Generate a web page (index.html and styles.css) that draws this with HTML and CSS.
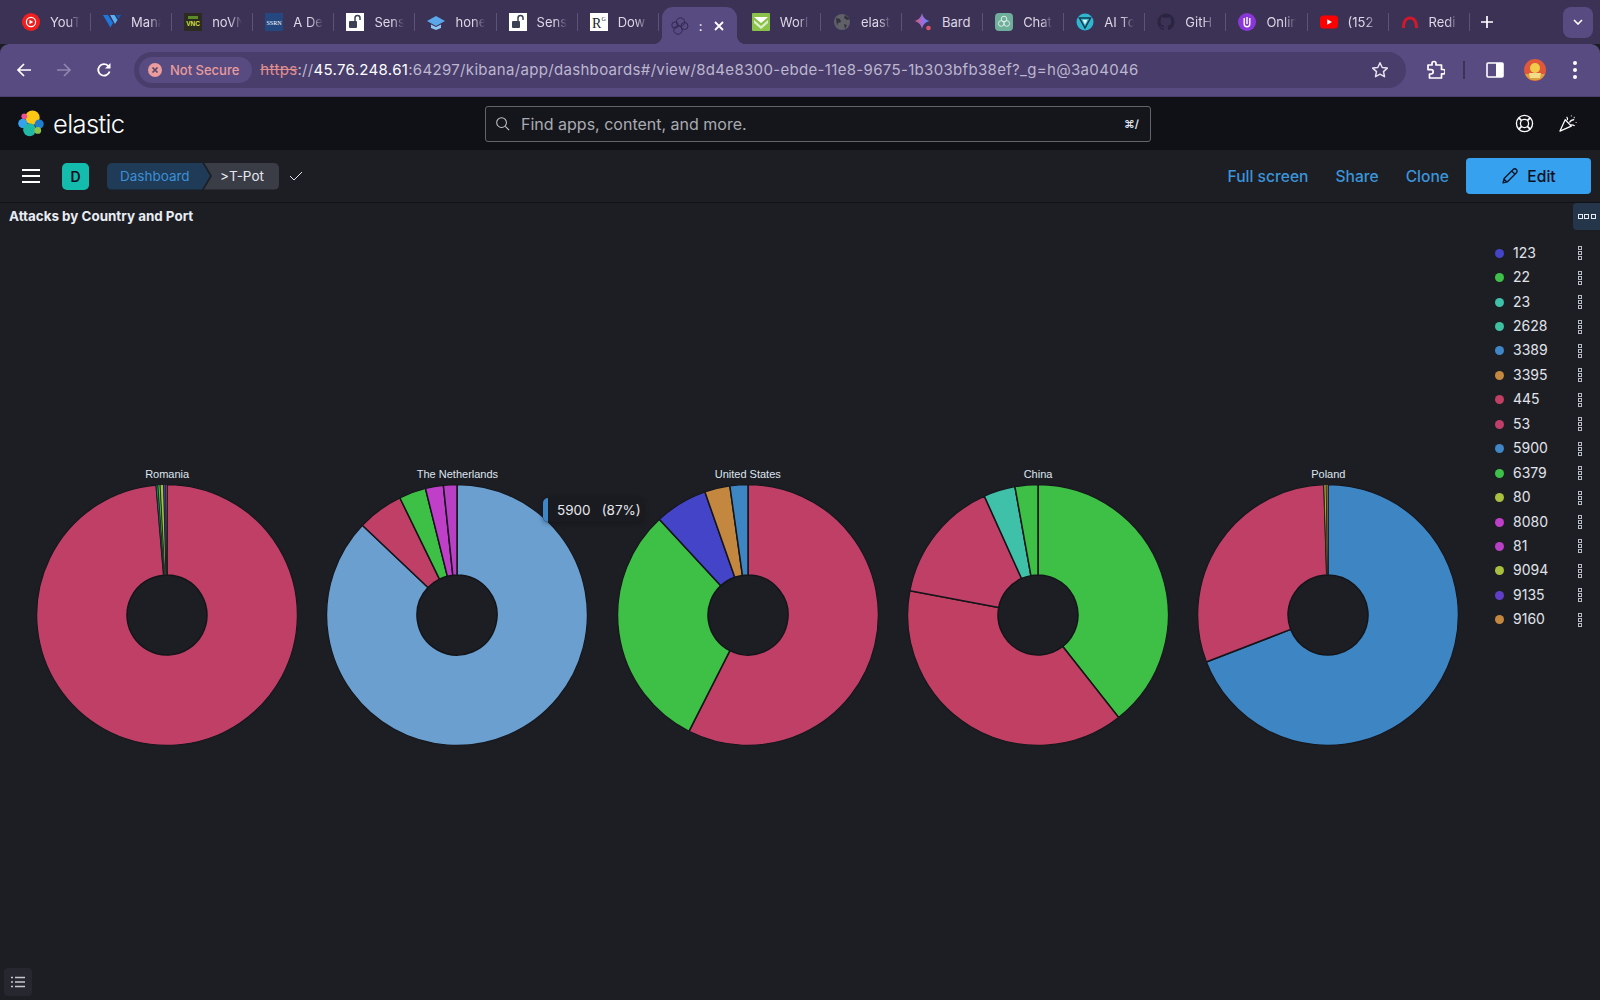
FILE: index.html
```html
<!DOCTYPE html>
<html>
<head>
<title>&gt;T-Pot - Elastic</title>
<link rel="stylesheet" href="styles.css">
</head>
<body>

  <!-- Browser tabs -->
  <div class="tabstrip">
    <div class="tab">
      <svg class="favicon" viewBox="0 0 18 18"><circle cx="9" cy="9" r="9" fill="#f01f1f"/><circle cx="9" cy="9" r="4.6" fill="none" stroke="#fff" stroke-width="1.2"/><path d="M7.5 6.7 11.2 9 7.5 11.3z" fill="#fff"/></svg>
      <span class="tab-title">YouT</span>
    </div>
    <div class="tab">
      <svg class="favicon" viewBox="0 0 18 18"><path d="M0 2h5l5 8-2.6 4.4z" fill="#1e78dc"/><path d="M7 2h4.500l3 5-2.500 4z" fill="#5ab0f5"/><path d="M13 2h5l-2.500 4z" fill="#0d5bb5"/></svg>
      <span class="tab-title">Mana</span>
    </div>
    <div class="tab">
      <svg class="favicon" viewBox="0 0 18 18"><rect width="18" height="18" fill="#2b2b22"/><text x="9" y="13" text-anchor="middle" class="vnc-mark">VNC</text><rect x="4" y="3" width="10" height="3" fill="#5a8a2a"/></svg>
      <span class="tab-title">noVN</span>
    </div>
    <div class="tab">
      <svg class="favicon" viewBox="0 0 18 18"><rect width="18" height="18" fill="#24477f"/><text x="9" y="11.500" text-anchor="middle" class="ssrn-mark">SSRN</text></svg>
      <span class="tab-title">A De</span>
    </div>
    <div class="tab">
      <svg class="favicon" viewBox="0 0 18 18"><rect width="18" height="18" fill="#fff"/><rect x="3" y="8" width="8" height="7" rx="1" fill="#3b4152"/><path d="M9 8V5a2.500 2.500 0 0 1 5 0v2" fill="none" stroke="#3b4152" stroke-width="1.500"/></svg>
      <span class="tab-title">Sens</span>
    </div>
    <div class="tab">
      <svg class="favicon" viewBox="0 0 18 18"><path d="M9 3l9 5-9 5-9-5z" fill="#5aa8ea"/><path d="M4 11.500 9 14l5-2.500V15l-5 2-5-2z" fill="#8cc6f2"/></svg>
      <span class="tab-title">hone</span>
    </div>
    <div class="tab">
      <svg class="favicon" viewBox="0 0 18 18"><rect width="18" height="18" fill="#fff"/><rect x="3" y="8" width="8" height="7" rx="1" fill="#3b4152"/><path d="M9 8V5a2.500 2.500 0 0 1 5 0v2" fill="none" stroke="#3b4152" stroke-width="1.500"/></svg>
      <span class="tab-title">Sens</span>
    </div>
    <div class="tab">
      <svg class="favicon" viewBox="0 0 18 18"><rect width="18" height="18" fill="#fff"/><text x="2" y="15" class="rg-mark">R</text><text x="11.500" y="8" class="rg-small">G</text></svg>
      <span class="tab-title">Dow</span>
    </div>
    <div class="tab active">
      <svg class="favicon" viewBox="0 0 18 18" fill="none" stroke="#2f2850" stroke-width="1"><circle cx="9.500" cy="5" r="4.200"/><circle cx="4" cy="8" r="3.200"/><circle cx="13.500" cy="9" r="3.500"/><circle cx="7" cy="13" r="4.200"/></svg>
      <span class="tab-colon">:</span>
      <svg class="tab-close" viewBox="0 0 10 10"><path d="M1 1 9 9M9 1 1 9" stroke="#fff" stroke-width="1.800"/></svg>
    </div>
    <div class="tab">
      <svg class="favicon" viewBox="0 0 18 18"><rect width="18" height="18" rx="1" fill="#8bc34a"/><path d="M2 4h14L9 10z" fill="#fff"/><path d="M2 7l7 6 7-6v3l-7 6-7-6z" fill="#dcedc8"/></svg>
      <span class="tab-title">Worl</span>
    </div>
    <div class="tab">
      <svg class="favicon" viewBox="0 0 18 18"><circle cx="9" cy="9" r="8" fill="#5f6068"/><path d="M3 5l4 1 1 3-3 1-1 3M12 2l-1 3 3 2 3-1M11 11l3 1-2 4z" fill="#35303f"/></svg>
      <span class="tab-title">elast</span>
    </div>
    <div class="tab">
      <svg class="favicon" viewBox="0 0 18 18"><path d="M8 0c.8 4 3 6.800 7.500 8C11 9.200 8.800 12 8 16 7.200 12 5 9.200.5 8 5 6.800 7.200 4 8 0z" fill="url(#bardfill)"/><circle cx="14.500" cy="15" r="2.300" fill="#d9566b"/><defs><linearGradient id="bardfill" x1="0" y1="0" x2="1" y2="0"><stop offset="0" stop-color="#d9566b"/><stop offset=".55" stop-color="#9a6fe0"/><stop offset="1" stop-color="#4c8df6"/></linearGradient></defs></svg>
      <span class="tab-title tab-title-full">Bard</span>
    </div>
    <div class="tab">
      <svg class="favicon" viewBox="0 0 18 18"><rect width="18" height="18" rx="4" fill="#6fae9a"/><g fill="none" stroke="#d9efe8" stroke-width="1"><circle cx="9" cy="6" r="2.800"/><circle cx="6.200" cy="10.500" r="2.800"/><circle cx="11.800" cy="10.500" r="2.800"/></g></svg>
      <span class="tab-title">Chat</span>
    </div>
    <div class="tab">
      <svg class="favicon" viewBox="0 0 18 18"><circle cx="9" cy="9" r="8.500" fill="#2fb6d0"/><path d="M3.500 5h11L9 15z" fill="none" stroke="#143a4c" stroke-width="1.500"/><path d="M6.500 6.800h5L9 11.500z" fill="#dff6fb"/></svg>
      <span class="tab-title">AI To</span>
    </div>
    <div class="tab">
      <svg class="favicon" viewBox="0 0 18 18"><path d="M9 .5a8.500 8.500 0 0 0-2.700 16.600c.4.100.6-.2.600-.4v-1.500c-2.400.5-2.900-1-2.900-1-.4-1-1-1.300-1-1.300-.8-.5.100-.5.100-.5.900.1 1.300.9 1.300.9.800 1.300 2 1 2.500.7.100-.6.300-1 .5-1.200-1.900-.2-3.900-1-3.900-4.200 0-.9.300-1.700.9-2.300-.1-.2-.4-1.100.1-2.300 0 0 .7-.2 2.300.9a8 8 0 0 1 4.200 0c1.600-1.100 2.300-.9 2.300-.9.500 1.200.2 2.100.1 2.300.5.600.9 1.400.9 2.300 0 3.300-2 4-3.900 4.200.3.300.6.800.6 1.600v2.300c0 .2.200.5.600.4A8.500 8.500 0 0 0 9 .5z" fill="#2a2540"/></svg>
      <span class="tab-title">GitH</span>
    </div>
    <div class="tab">
      <svg class="favicon" viewBox="0 0 18 18"><circle cx="9" cy="9" r="9" fill="#8b36d9"/><path d="M6.200 5v6a2.800 2.800 0 0 0 5.600 0V5" fill="none" stroke="#fff" stroke-width="1.400"/><path d="M9 4v7" stroke="#fff" stroke-width="1.400"/></svg>
      <span class="tab-title">Onlin</span>
    </div>
    <div class="tab">
      <svg class="favicon" viewBox="0 0 18 18"><rect y="2.500" width="18" height="13" rx="3.500" fill="#f00"/><path d="M7.200 6.200 12 9l-4.800 2.800z" fill="#fff"/></svg>
      <span class="tab-title">(152</span>
    </div>
    <div class="tab">
      <svg class="favicon" viewBox="0 0 18 18"><path d="M1 15C1 7 4.500 3.500 9 3.500S17 7 17 15h-3C14 9 12 6.500 9 6.500S4 9 4 15z" fill="#d3182a"/></svg>
      <span class="tab-title">Redi</span>
    </div>
    <div class="new-tab">
      <svg viewBox="0 0 12 12"><path d="M6 0v12M0 6h12" stroke="#fff" stroke-width="1.700"/></svg>
    </div>
    <div class="tab-search">
      <svg viewBox="0 0 10 6"><path d="M1 1l4 4 4-4" fill="none" stroke="#fff" stroke-width="1.600"/></svg>
    </div>
  </div>

  <!-- Browser toolbar -->
  <div class="toolbar">
    <svg class="nav-icon" viewBox="0 0 16 16"><path d="M15 8H2M8 2 2 8l6 6" fill="none" stroke="#fff" stroke-width="1.700"/></svg>
    <svg class="nav-icon" viewBox="0 0 16 16"><path d="M1 8h13M8 2l6 6-6 6" fill="none" stroke="#8f86ad" stroke-width="1.700"/></svg>
    <svg class="nav-icon" viewBox="0 0 16 16"><path d="M13.600 9.500A5.800 5.800 0 1 1 12.200 3.800" fill="none" stroke="#fff" stroke-width="1.800"/><path d="M14.500 1v5.500H9z" fill="#fff"/></svg>

    <div class="omnibox">
      <div class="not-secure">
        <svg viewBox="0 0 14 14"><circle cx="7" cy="7" r="7" fill="#ec9c9c"/><path d="M4.500 4.500l5 5M9.500 4.500l-5 5" stroke="#54486f" stroke-width="1.700"/></svg>
        <span>Not Secure</span>
      </div>
      <div class="url"><span class="url-scheme">https</span>://<span class="url-host">45.76.248.61</span>:64297/kibana/app/dashboards#/view/8d4e8300-ebde-11e8-9675-1b303bfb38ef?_g=h@3a04046</div>
      <svg class="star" viewBox="0 0 18 18"><path d="M9 1.800l2.200 4.700 5.100.6-3.800 3.500 1 5.100L9 13.200l-4.500 2.500 1-5.100L1.700 7.100l5.100-.6z" fill="none" stroke="#e6e2ef" stroke-width="1.500" stroke-linejoin="round"/></svg>
    </div>

    <div class="toolbar-right">
      <svg class="puzzle" viewBox="0 0 20 20"><path d="M7 3.500a2 2 0 0 1 4 0V5h5.500v4.500H18a2.200 2.200 0 0 1 0 4.400h-1.500V18H4.500v-4H6a2.200 2.200 0 0 0 0-4.400H3V5h4z" fill="none" stroke="#fff" stroke-width="1.700" stroke-linejoin="round"/></svg>
      <span class="toolbar-sep"></span>
      <svg class="sidepanel" viewBox="0 0 18 16"><rect x="1" y="1" width="16" height="14" rx="1" fill="none" stroke="#fff" stroke-width="1.600"/><rect x="10" y="1" width="7" height="14" fill="#fff"/></svg>
      <svg class="avatar" viewBox="0 0 22 22"><circle cx="11" cy="11" r="11" fill="#e0583a"/><path d="M1 15h20a11 11 0 0 1-20 0z" fill="#d9a23c"/><circle cx="11" cy="9" r="5" fill="#f3cb4a"/><path d="M5 14h12l-1 5H6z" fill="#f2dc8a"/></svg>
      <svg class="kebab-browser" viewBox="0 0 4 18"><circle cx="2" cy="2" r="2" fill="#fff"/><circle cx="2" cy="9" r="2" fill="#fff"/><circle cx="2" cy="16" r="2" fill="#fff"/></svg>
    </div>
  </div>

  <!-- Kibana header -->
  <div class="kbn-header">
    <div class="brand">
      <svg class="elastic-logo" viewBox="0 0 28 28">
        <circle cx="15" cy="8" r="7.500" fill="#fec514"/>
        <circle cx="6.500" cy="6.500" r="3" fill="#f04e98"/>
        <circle cx="5" cy="14" r="4.800" fill="#36a2ef"/>
        <circle cx="12" cy="20.500" r="6.700" fill="#22b8a6"/>
        <circle cx="22" cy="14.500" r="4.700" fill="#1e7fd0"/>
        <circle cx="20.500" cy="21.200" r="3.500" fill="#8bc34a"/>
      </svg>
      <span class="wordmark">elastic</span>
    </div>
    <div class="global-search">
      <svg viewBox="0 0 16 16"><circle cx="7" cy="7" r="5.200" fill="none" stroke="#c8cad0" stroke-width="1.100"/><path d="M11 11l4 4" stroke="#c8cad0" stroke-width="1.100"/></svg>
      <span class="search-text">Find apps, content, and more.</span>
      <span class="search-key">⌘/</span>
    </div>
    <div class="header-icons">
      <svg viewBox="0 0 20 20" fill="none" stroke="#fff" stroke-width="1.400"><circle cx="10" cy="10" r="8.500"/><circle cx="10" cy="10" r="4.300"/><path d="M4 4l3 3M16 4l-3 3M4 16l3-3M16 16l-3-3" stroke-width="1.800"/></svg>
      <svg viewBox="0 0 20 20" fill="none" stroke="#fff" stroke-width="1.300"><path d="M6.500 6 1 18l12-5.300z" stroke-linejoin="round"/><path d="M8 3c1 1 1.200 2.300.8 3.500M11 9c1.500-2.500 3-3 5-3M11.500 12c1.500-1 3-1 5 .5"/><path d="M13 1.500v1M16 3v1.500M18 8.500v1" stroke-width="1"/></svg>
    </div>
  </div>

  <!-- Dashboard breadcrumb bar -->
  <div class="kbn-subheader">
    <svg class="hamburger" viewBox="0 0 18 14"><path d="M0 1h18M0 7h18M0 13h18" stroke="#fff" stroke-width="1.900"/></svg>
    <div class="space-badge">D</div>
    <div class="crumbs">
      <span class="crumb crumb-link">Dashboard</span>
      <span class="crumb crumb-current">&gt;T-Pot</span>
    </div>
    <svg class="crumb-check" viewBox="0 0 14 10"><path d="M1 5l4 4 8-8" fill="none" stroke="#dfe5ef" stroke-width="1"/></svg>
    <div class="actions">
      <span class="action-link">Full screen</span>
      <span class="action-link">Share</span>
      <span class="action-link">Clone</span>
      <div class="edit-btn">
        <svg viewBox="0 0 16 16"><path d="M10.800 2.200a2 2 0 0 1 2.900 2.900l-8 8-3.900 1 1-3.900zM9.500 3.500l3 3M3 11l2 2" fill="none" stroke="#0b1628" stroke-width="1.200" stroke-linejoin="round"/></svg>
        <span>Edit</span>
      </div>
    </div>
  </div>

  <!-- Panel -->
  <div class="panel">
    <div class="panel-head">
      <span class="panel-title">Attacks by Country and Port</span>
      <div class="panel-options"><i></i><i></i><i></i></div>
    </div>

    <div class="panel-body">
      <div class="charts">
        <div class="chart"><div class="chart-label">Romania</div><svg class="pie" data-pie="romania" viewBox="-131 -131 262 262"></svg></div>
        <div class="chart"><div class="chart-label">The Netherlands</div><svg class="pie" data-pie="netherlands" viewBox="-131 -131 262 262"></svg></div>
        <div class="chart"><div class="chart-label">United States</div><svg class="pie" data-pie="us" viewBox="-131 -131 262 262"></svg></div>
        <div class="chart"><div class="chart-label">China</div><svg class="pie" data-pie="china" viewBox="-131 -131 262 262"></svg></div>
        <div class="chart"><div class="chart-label">Poland</div><svg class="pie" data-pie="poland" viewBox="-131 -131 262 262"></svg></div>
        <div class="chart-tip"><span class="tip-bar"></span><span>5900</span><span>(87%)</span></div>
      </div>

      <ul class="legend">
        <li><span class="dot c-indigo"></span><span class="port">123</span><span class="kebab"><i></i><i></i><i></i></span></li>
        <li><span class="dot c-green"></span><span class="port">22</span><span class="kebab"><i></i><i></i><i></i></span></li>
        <li><span class="dot c-teal"></span><span class="port">23</span><span class="kebab"><i></i><i></i><i></i></span></li>
        <li><span class="dot c-teal2"></span><span class="port">2628</span><span class="kebab"><i></i><i></i><i></i></span></li>
        <li><span class="dot c-blue"></span><span class="port">3389</span><span class="kebab"><i></i><i></i><i></i></span></li>
        <li><span class="dot c-orange"></span><span class="port">3395</span><span class="kebab"><i></i><i></i><i></i></span></li>
        <li><span class="dot c-red"></span><span class="port">445</span><span class="kebab"><i></i><i></i><i></i></span></li>
        <li><span class="dot c-rose"></span><span class="port">53</span><span class="kebab"><i></i><i></i><i></i></span></li>
        <li><span class="dot c-blue"></span><span class="port">5900</span><span class="kebab"><i></i><i></i><i></i></span></li>
        <li><span class="dot c-green"></span><span class="port">6379</span><span class="kebab"><i></i><i></i><i></i></span></li>
        <li><span class="dot c-lime"></span><span class="port">80</span><span class="kebab"><i></i><i></i><i></i></span></li>
        <li><span class="dot c-magenta"></span><span class="port">8080</span><span class="kebab"><i></i><i></i><i></i></span></li>
        <li><span class="dot c-purple"></span><span class="port">81</span><span class="kebab"><i></i><i></i><i></i></span></li>
        <li><span class="dot c-lime"></span><span class="port">9094</span><span class="kebab"><i></i><i></i><i></i></span></li>
        <li><span class="dot c-violet"></span><span class="port">9135</span><span class="kebab"><i></i><i></i><i></i></span></li>
        <li><span class="dot c-orange"></span><span class="port">9160</span><span class="kebab"><i></i><i></i><i></i></span></li>
      </ul>
    </div>

    <div class="inspector">
      <svg viewBox="0 0 14 12"><path d="M4 1.500h10M4 6h10M4 10.500h10M0 1.500h2M0 6h2M0 10.500h2" stroke="#c6c8d0" stroke-width="1.300"/></svg>
    </div>
  </div>

  <script src="pie.js"></script>
</body>
</html>
```

FILE: styles.css
```css
/* Page */
body {
  margin: 0;
  height: 1000px;
  overflow: hidden;
  display: flex;
  flex-direction: column;
  background: #1d1e24;
  font-family: 'Inter', sans-serif;
  color: #dfe5ef;
}

/* Browser tabs */
.tabstrip {
  height: 44px;
  flex: none;
  display: flex;
  align-items: center;
  padding-left: 10px;
  background: #3c3256;
  box-sizing: border-box;
}

.tab {
  width: 81.100px;
  height: 18px;
  flex: none;
  box-sizing: border-box;
  display: flex;
  align-items: center;
  gap: 10px;
  padding-left: 12px;
  border-right: 1px solid #5d5379;
}

.favicon {
  width: 18px;
  height: 18px;
  flex: none;
}

/* titles fade out at the same spot whatever their length */
.tab-title {
  white-space: nowrap;
  font-size: 13px;
  color: #dcd8e6;
  -webkit-mask-image: linear-gradient(to right, #000 18px, transparent 30px);
  mask-image: linear-gradient(to right, #000 18px, transparent 30px);
}

.tab-title-full {
  -webkit-mask-image: none;
  mask-image: none;
}

.tab.active {
  position: relative;
  width: 75.100px;
  height: 37px;
  margin: 7px 3px 0;
  padding-left: 9px;
  gap: 0;
  border-right: none;
  background: #584b81;
  border-radius: 11px 11px 0 0;
}

.tab.active::before,
.tab.active::after {
  content: "";
  position: absolute;
  bottom: 0;
  width: 9px;
  height: 9px;
}

.tab.active::before {
  left: -9px;
  background: radial-gradient(circle at 0 0, transparent 9px, #584b81 9.5px);
}

.tab.active::after {
  right: -9px;
  background: radial-gradient(circle at 100% 0, transparent 9px, #584b81 9.5px);
}

.tab-colon {
  margin-left: 10px;
  font-size: 13px;
  color: #fff;
}

.tab-close {
  width: 10px;
  height: 10px;
  margin-left: 11px;
}

.vnc-mark {
  font: bold 6.500px 'Liberation Sans', sans-serif;
  fill: #d8e23c;
}

.ssrn-mark {
  font: 6px 'Liberation Serif', serif;
  fill: #fff;
}

.rg-mark {
  font: 14px 'Liberation Serif', serif;
  fill: #222;
}

.rg-small {
  font: 6px 'Liberation Serif', serif;
  fill: #222;
}

.new-tab {
  width: 12px;
  height: 12px;
  margin-left: 11px;
  display: flex;
}

.tab-search {
  width: 30px;
  height: 31px;
  margin-left: auto;
  margin-right: 7px;
  background: #584b81;
  border-radius: 8px;
  display: flex;
  align-items: center;
  justify-content: center;
}

.tab-search svg {
  width: 10px;
  height: 6px;
}

/* Browser toolbar */
.toolbar {
  height: 53px;
  flex: none;
  box-sizing: border-box;
  display: flex;
  align-items: center;
  gap: 24px;
  padding: 0 17px 1px 16px;
  background: #584b81;
  border-radius: 9px 9px 0 0;
  border-bottom: 1px solid #4a3f6e;
}

.nav-icon {
  width: 16px;
  height: 16px;
  flex: none;
}

.omnibox {
  width: 1272px;
  height: 36px;
  flex: none;
  margin-left: -2px;
  box-sizing: border-box;
  display: flex;
  align-items: center;
  padding: 0 17px 0 5px;
  background: #483d6b;
  border-radius: 18px;
}

.not-secure {
  height: 26px;
  box-sizing: border-box;
  display: flex;
  align-items: center;
  gap: 8px;
  padding: 0 13px 0 9px;
  background: #584b81;
  border-radius: 13px;
  font-size: 13px;
  font-weight: 500;
  color: #e89c9c;
}

.not-secure svg {
  width: 14px;
  height: 14px;
}

.url {
  margin-left: 8px;
  font-size: 15px;
  letter-spacing: 0.325px;
  color: #bdb7cf;
  white-space: nowrap;
}

.url-scheme {
  color: #e08f8f;
  text-decoration: line-through;
}

.url-host {
  color: #fff;
}

.star {
  width: 18px;
  height: 18px;
  margin-left: auto;
}

.toolbar-right {
  display: flex;
  align-items: center;
  margin-left: -5px;
}

.puzzle {
  width: 20px;
  height: 20px;
}

.toolbar-sep {
  width: 2px;
  height: 18px;
  margin-left: 18px;
  background: #3c3256;
}

.sidepanel {
  width: 18px;
  height: 16px;
  margin-left: 21px;
}

.avatar {
  width: 22px;
  height: 22px;
  margin-left: 20px;
}

.kebab-browser {
  width: 4px;
  height: 18px;
  margin-left: 27px;
}

/* Kibana header */
.kbn-header {
  height: 53px;
  flex: none;
  box-sizing: border-box;
  display: flex;
  align-items: center;
  padding: 0 22px 0 18px;
  background: #101116;
}

.brand {
  display: flex;
  align-items: center;
  gap: 8px;
  width: 467px;
}

.elastic-logo {
  width: 27px;
  height: 27px;
}

.wordmark {
  font-size: 25.500px;
  font-weight: 300;
  color: #fff;
  letter-spacing: -0.6px;
}

.global-search {
  width: 666px;
  height: 36px;
  box-sizing: border-box;
  display: flex;
  align-items: center;
  padding: 0 11px 0 9px;
  border: 1px solid #62646c;
  border-radius: 3px;
  background: #15161b;
}

.global-search svg {
  width: 15px;
  height: 15px;
}

.search-text {
  margin-left: 11px;
  font-size: 16px;
  color: #a9abb2;
}

.search-key {
  margin-left: auto;
  font-size: 11px;
  font-weight: 600;
  color: #dfe5ef;
}

.header-icons {
  margin-left: auto;
  display: flex;
  align-items: center;
  gap: 25px;
}

.header-icons svg {
  width: 19px;
  height: 19px;
}

/* Breadcrumb bar */
.kbn-subheader {
  height: 53px;
  flex: none;
  box-sizing: border-box;
  display: flex;
  align-items: center;
  padding: 0 9px 0 22px;
  background: #1d1e24;
  border-bottom: 1px solid #111217;
}

.hamburger {
  width: 18px;
  height: 14px;
}

.space-badge {
  width: 27px;
  height: 27px;
  margin-left: 22px;
  display: flex;
  align-items: center;
  justify-content: center;
  background: #14bcae;
  border-radius: 5px;
  font-size: 14px;
  font-weight: 600;
  color: #07101c;
}

.crumbs {
  display: flex;
  height: 27px;
  margin-left: 18px;
  font-size: 13.500px;
  line-height: 27px;
}

.crumb {
  box-sizing: border-box;
}

.crumb-link {
  width: 103px;
  padding-left: 13px;
  background: #1f3b57;
  color: #3c8fd6;
  border-radius: 5px 0 0 5px;
  clip-path: polygon(0 0, calc(100% - 8px) 0, 100% 50%, calc(100% - 8px) 100%, 0 100%);
}

.crumb-current {
  width: 75px;
  margin-left: -6px;
  padding-left: 16px;
  background: #3a3d45;
  color: #e4e8f0;
  border-radius: 0 5px 5px 0;
  clip-path: polygon(0 0, 100% 0, 100% 100%, 0 100%, 8px 50%);
}

.crumb-check {
  width: 14px;
  height: 10px;
  margin-left: 10px;
}

.actions {
  margin-left: auto;
  display: flex;
  align-items: center;
  gap: 27px;
}

.action-link {
  font-size: 15.600px;
  font-weight: 500;
  color: #3b95da;
}

.edit-btn {
  width: 125px;
  height: 36px;
  margin-left: -10px;
  display: flex;
  align-items: center;
  justify-content: center;
  gap: 8px;
  background: #36a2ef;
  border-radius: 4px;
  font-size: 15.600px;
  font-weight: 500;
  color: #07101c;
}

.edit-btn svg {
  width: 18px;
  height: 18px;
}

/* Panel */
.panel {
  flex: 1;
  position: relative;
}

.panel-head {
  height: 27px;
  display: flex;
  align-items: center;
  justify-content: space-between;
  padding-left: 9px;
}

.panel-title {
  margin-top: -2px;
  font-size: 13.400px;
  font-weight: 700;
  color: #e8ecf3;
}

.panel-options {
  width: 27px;
  height: 27px;
  display: flex;
  align-items: center;
  justify-content: center;
  gap: 1.500px;
  background: #25364b;
  border-radius: 4px 0 0 4px;
}

.panel-options i {
  width: 3px;
  height: 3px;
  border: 1px solid #e4e8f0;
}

.panel-body {
  display: flex;
  justify-content: space-between;
}

.charts {
  position: relative;
  display: flex;
  margin: 237px 0 0 22px;
  height: 282px;
}

.chart {
  width: 290.300px;
  display: flex;
  flex-direction: column;
  align-items: center;
}

.chart-label {
  height: 14px;
  margin-bottom: 3px;
  font: 11px/14px 'Liberation Sans', sans-serif;
  color: #dfe5ef;
}

.pie {
  width: 262px;
  height: 262px;
}

.chart-tip {
  position: absolute;
  left: 521px;
  top: 31px;
  width: 100px;
  height: 24px;
  box-sizing: border-box;
  display: flex;
  align-items: center;
  gap: 11px;
  padding-left: 14px;
  background: #1a1b20;
  border-radius: 5px;
  box-shadow: 0 1px 5px rgba(10, 11, 14, 0.45);
  font-size: 13.500px;
  color: #e6e8ee;
}

.tip-bar {
  position: absolute;
  left: 0;
  top: 0;
  width: 5px;
  height: 24px;
  background: #3f86c6;
  border-radius: 5px 0 0 5px;
}

/* Legend */
.legend {
  list-style: none;
  margin: 11px 0 0;
  padding: 0;
  width: 105px;
}

.legend li {
  height: 24.450px;
  display: flex;
  align-items: center;
  font-size: 14px;
  color: #e0e3ea;
}

.dot {
  width: 9px;
  height: 9px;
  border-radius: 50%;
}

.port {
  margin-left: 9px;
  position: relative;
  top: -1px;
}

.kebab {
  margin-left: auto;
  margin-right: 18px;
  display: flex;
  flex-direction: column;
  gap: 1px;
}

.kebab i {
  box-sizing: border-box;
  width: 4px;
  height: 4px;
  border: 1px solid #b8bcc4;
}

.c-indigo { background: #4444c8; }
.c-green { background: #3fc04a; }
.c-teal { background: #3fc0a8; }
.c-teal2 { background: #3fc0a0; }
.c-blue { background: #3f86c6; }
.c-orange { background: #c4873f; }
.c-red { background: #c03f62; }
.c-rose { background: #c03f6a; }
.c-lime { background: #a8c03f; }
.c-magenta { background: #c03fc8; }
.c-purple { background: #b93fc4; }
.c-violet { background: #5f3fc8; }

/* Inspector button, bottom left */
.inspector {
  position: absolute;
  left: 4px;
  bottom: 4px;
  width: 28px;
  height: 28px;
  display: flex;
  align-items: center;
  justify-content: center;
  background: #26272f;
  border-radius: 4px;
}

.inspector svg {
  width: 14px;
  height: 12px;
}
```

FILE: pie.js
```js
// slices run clockwise from 12 o'clock, each one ends at the given angle
const RED = "#bf3f67";
const GREEN = "#3dc045";
const BLUE = "#3e85c4";
const PIES = {
  romania: [[355.2, RED], [356, "#2f8f7a"], [357, GREEN], [358.5, "#a8c03f"], [359.5, "#4a3fc8"], [360, "#c4873f"]],
  netherlands: [[313.5, "#6a9fd0"], [334, RED], [346, GREEN], [354, "#c03fc8"], [360, "#b93fc4"]],
  us: [[206.9, RED], [317.2, GREEN], [340.7, "#4444c8"], [352, "#c4873f"], [360, BLUE]],
  china: [[141.8, GREEN], [280.7, "#c03f62"], [335.7, RED], [349.8, "#3fc0a8"], [360, GREEN]],
  poland: [[248.9, BLUE], [358.2, RED], [359.2, "#a8c03f"], [360, "#c4873f"]],
};

const OUTER = 130.5;
const INNER = 40;

function point(r, deg) {
  const a = (deg * Math.PI) / 180;
  return (r * Math.sin(a)).toFixed(2) + " " + (-r * Math.cos(a)).toFixed(2);
}

function slicePath(from, to) {
  const big = to - from > 180 ? 1 : 0;
  return "M" + point(INNER, from) +
    "L" + point(OUTER, from) +
    "A" + OUTER + " " + OUTER + " 0 " + big + " 1 " + point(OUTER, to) +
    "L" + point(INNER, to) +
    "A" + INNER + " " + INNER + " 0 " + big + " 0 " + point(INNER, from) + "Z";
}

document.querySelectorAll("svg[data-pie]").forEach(svg => {
  let from = 0;
  let markup = "";
  PIES[svg.dataset.pie].forEach(([to, color]) => {
    // the thin slivers would vanish under a full width stroke
    const width = to - from < 2 ? 0.7 : 1.5;
    markup += '<path d="' + slicePath(from, to) + '" fill="' + color + '" stroke="#14151a" stroke-width="' + width + '"/>';
    from = to;
  });
  // soften the outer rim into the background
  markup += '<circle r="131" fill="none" stroke="#1d1e24" stroke-width="1"/>';
  svg.innerHTML = markup;
});
```
